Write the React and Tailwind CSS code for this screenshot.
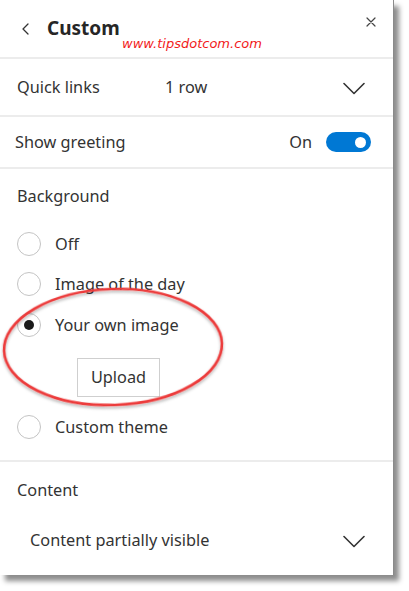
import React from "react";

function ChevronDown() {
  return (
    <svg width="22" height="13" viewBox="0 0 22 13" fill="none">
      <path d="M1 1.5 L11 11.5 L21 1.5" stroke="#333" strokeWidth="1.6" strokeLinecap="round" strokeLinejoin="round" />
    </svg>
  );
}

function Radio({ checked }) {
  return (
    <div className="w-[24px] h-[24px] rounded-full border border-[#c4c4c4] bg-white flex items-center justify-center shrink-0">
      {checked && <div className="w-[10px] h-[10px] rounded-full bg-[#1a1a1a]" />}
    </div>
  );
}

function Divider() {
  return <div className="h-[2px] bg-[#ececec] w-full" />;
}

export default function App() {
  const font = { fontFamily: '"Noto Sans", "Open Sans", sans-serif' };
  return (
    <div className="w-[409px] h-[591px] bg-white relative overflow-hidden" style={font}>
      <div className="w-[394px] h-[575px] bg-white border-r border-[#8a8a8a] shadow-[5px_6px_5px_rgba(0,0,0,0.45)] flex flex-col text-[#333333] relative">
        {/* Header */}
        <div className="h-[57px] flex items-center relative">
          <svg className="ml-[22px]" width="7" height="12" viewBox="0 0 7 12" fill="none">
            <path d="M6 1 L1 6 L6 11" stroke="#333" strokeWidth="1.3" strokeLinecap="round" strokeLinejoin="round" />
          </svg>
          <div className="ml-[18px] text-[19px] font-bold text-[#262626] leading-none -mt-[1px]">Custom</div>
          <svg className="absolute left-[366px] top-[17px]" width="10" height="10" viewBox="0 0 10 10" fill="none">
            <path d="M1 1 L9 9 M9 1 L1 9" stroke="#444" strokeWidth="1.2" strokeLinecap="round" />
          </svg>
          <div
            className="absolute left-[122px] top-[37px] text-[13px] italic text-[#f21a1a] leading-none"
            style={{ fontFamily: '"DejaVu Sans", Verdana, sans-serif' }}
          >
            www.tipsdotcom.com
          </div>
        </div>
        <Divider />
        {/* Quick links */}
        <div className="h-[56px] flex items-center text-[16.3px]">
          <div className="ml-[17px] w-[148px]">Quick links</div>
          <div className="flex-1">1 row</div>
          <div className="mr-[28px] mt-[2px]"><ChevronDown /></div>
        </div>
        <Divider />
        {/* Show greeting */}
        <div className="h-[50px] flex items-center text-[16.3px]">
          <div className="ml-[15px] flex-1">Show greeting</div>
          <div className="mr-[14px]">On</div>
          <div className="w-[45px] h-[20px] rounded-full bg-[#0078d4] flex items-center justify-end pr-[5px] mr-[22px]">
            <div className="w-[11px] h-[11px] rounded-full bg-white" />
          </div>
        </div>
        <Divider />
        {/* Background */}
        <div className="flex flex-col text-[16.3px] relative">
          <div className="h-[55px] flex items-center pl-[17px]">Background</div>
          <div className="h-[40px] flex items-center pl-[17px] gap-[14px]">
            <Radio />
            <span>Off</span>
          </div>
          <div className="h-[40px] flex items-center pl-[17px] gap-[14px]">
            <Radio />
            <span>Image of the day</span>
          </div>
          <div className="h-[42px] flex items-center pl-[17px] gap-[14px]">
            <Radio checked />
            <span>Your own image</span>
          </div>
          <div className="mt-[12px] ml-[77px] w-[83px] h-[39px] border border-[#cfcfcf] flex items-center justify-center bg-white">
            Upload
          </div>
          <div className="mt-[10px] h-[40px] flex items-center pl-[17px] gap-[14px]">
            <Radio />
            <span>Custom theme</span>
          </div>
          <div className="h-[13px]" />
          <svg className="absolute left-0 top-[112px] pointer-events-none" width="230" height="132" viewBox="0 0 230 132" fill="none">
            <defs>
              <filter id="sh" x="-10%" y="-10%" width="120%" height="130%">
                <feDropShadow dx="0" dy="2" stdDeviation="1.5" floodColor="#000" floodOpacity="0.3" />
              </filter>
            </defs>
            <ellipse cx="113" cy="66" rx="109" ry="58" stroke="#ec3a3a" strokeWidth="2.6" transform="rotate(-2 113 66)" filter="url(#sh)" />
          </svg>
        </div>
        <Divider />
        {/* Content */}
        <div className="flex flex-col text-[16.3px]">
          <div className="h-[56px] flex items-center pl-[17px]">Content</div>
          <div className="h-[44px] flex items-center">
            <div className="ml-[30px] flex-1">Content partially visible</div>
            <div className="mr-[28px] mt-[2px]"><ChevronDown /></div>
          </div>
        </div>
      </div>
    </div>
  );
}
